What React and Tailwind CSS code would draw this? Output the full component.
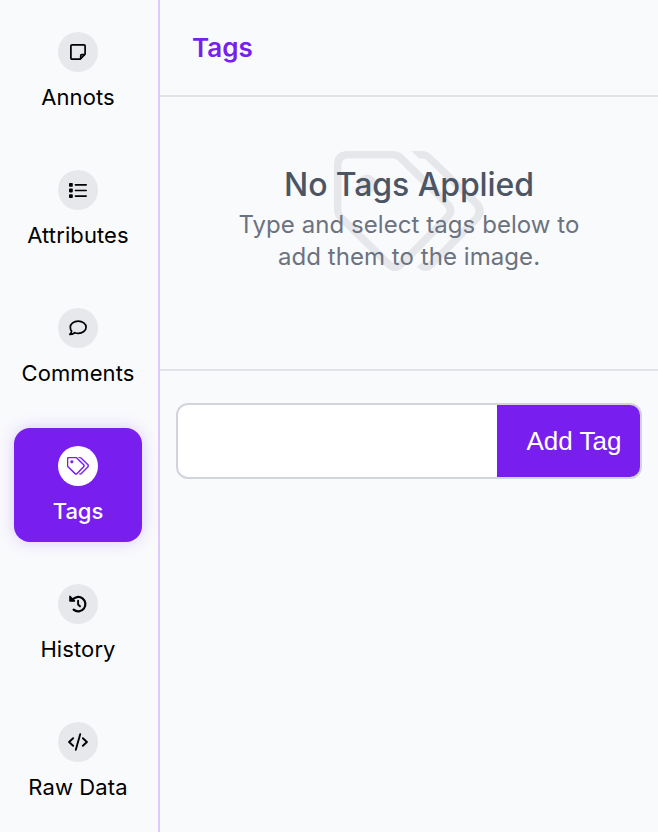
import { useState } from 'react'
import clsx from 'clsx'

function NoteIcon() {
  return (
    <svg width="16" height="16" viewBox="0 0 16 16" fill="none" stroke="currentColor" strokeWidth="1.7" strokeLinejoin="round">
      <path d="M2 .9h12A1.100 1.100 0 0 1 15.100 2v8.200l-4.900 4.900H2A1.100 1.100 0 0 1 .9 14V2A1.100 1.100 0 0 1 2 .9z" />
      <path d="M15 10.700h-3.300a1 1 0 0 0-1 1V15" />
    </svg>
  )
}

function ListIcon() {
  return (
    <svg width="18" height="15" viewBox="0 0 18 15" fill="currentColor">
      <rect x="0" y="0" width="3.8" height="3.8" rx=".8" />
      <rect x="0" y="5.6" width="3.8" height="3.8" rx=".8" />
      <rect x="0" y="11.2" width="3.8" height="3.8" rx=".8" />
      <rect x="5.6" y="1.1" width="12.4" height="1.6" rx=".8" />
      <rect x="5.6" y="6.7" width="12.4" height="1.6" rx=".8" />
      <rect x="5.6" y="12.3" width="12.4" height="1.6" rx=".8" />
    </svg>
  )
}

function CommentIcon() {
  return (
    <svg width="18" height="16" viewBox="0 0 18 16" fill="none" stroke="currentColor" strokeWidth="1.7" strokeLinejoin="round">
      <path d="M9.200 1.100c4.400 0 7.900 2.700 7.900 6.100s-3.500 6.100-7.900 6.100c-1.200 0-2.400-.2-3.400-.6-1.300.9-3 1.700-4.900 1.700.8-.9 1.500-2.100 1.700-3.300C1.700 10.100 1.300 8.700 1.300 7.200c0-3.400 3.500-6.100 7.900-6.100z" />
    </svg>
  )
}

function TagsIcon({ className, outline = 0 }) {
  return (
    <svg viewBox="0 0 150 120" fill="currentColor" className={className}>
      <path
        d="M14 3.750H59q4.500 0 7.500 3L113.500 53q6 7 0 13L67 113.500q-6 5.500-12 0L7 66.500q-3.250-3.250-3.250-7.500V14q0-10.250 10.250-10.250z"
        fill="none" stroke="currentColor" strokeWidth={7.5 + outline}
      />
      <circle cx="33" cy="33" r="9.500" stroke="currentColor" strokeWidth={outline} />
      <path
        d="M77.500 0H88q5.500 0 9.500 4L145.500 50q8.500 10 0 20L100 116q-8.500 8-17.300-.3l5.300-4.200q3.500 2 6.700-.8L139.500 65q3.500-5 0-10L92.500 9.200q-1.600-1.700-4-1.700H85z"
        stroke="currentColor" strokeWidth={outline}
      />
    </svg>
  )
}

function HistoryIcon() {
  return (
    <svg width="18" height="18" viewBox="0 0 18 18" fill="none" stroke="currentColor" strokeWidth="2.200" strokeLinecap="round" strokeLinejoin="round">
      <path d="M3.300 5A7.200 7.200 0 1 1 4.600 14.700" />
      <path d="M.9 1.300V6h4.700z" fill="currentColor" strokeWidth="1.300" />
      <path d="M9.100 5.700v3.800l1.900 1.800" strokeWidth="1.900" />
    </svg>
  )
}

function CodeIcon() {
  return (
    <svg width="20" height="18" viewBox="0 0 20 18" fill="none" stroke="currentColor" strokeWidth="1.900" strokeLinecap="round" strokeLinejoin="round">
      <path d="M5.100 5.200 1.100 9l4 3.800M14.900 5.200l4 3.800-4 3.800M12.200 1.200 7.800 16.800" />
    </svg>
  )
}

const tabs = [
  { id: 'annots', label: 'Annots', icon: <NoteIcon /> },
  { id: 'attributes', label: 'Attributes', icon: <ListIcon /> },
  { id: 'comments', label: 'Comments', icon: <CommentIcon /> },
  { id: 'tags', label: 'Tags', icon: <TagsIcon className="w-[22px]" outline={2.5} /> },
  { id: 'history', label: 'History', icon: <HistoryIcon /> },
  { id: 'raw', label: 'Raw Data', icon: <CodeIcon /> },
]

function Sidebar({ active, onSelect }) {
  return (
    <nav className="flex w-40 shrink-0 flex-col gap-6 border-r-2 border-[#dfc8fb] py-3.5 pl-3.5">
      {tabs.map((tab) => {
        const isActive = tab.id === active
        return (
          <button
            key={tab.id}
            onClick={() => onSelect(tab.id)}
            className={clsx(
              'flex h-[114px] w-32 shrink-0 flex-col items-center rounded-2xl pt-[18px]',
              isActive ? 'bg-[#781ff0] text-white shadow-[0_0_16px_rgba(120,31,240,0.22)]' : 'text-black',
            )}
          >
            <span className={clsx('flex size-10 items-center justify-center rounded-full', isActive ? 'bg-white text-[#781ff0]' : 'bg-[#e7e8ec]')}>
              {tab.icon}
            </span>
            <span className={clsx('mt-2.5 text-[22px] leading-[30px] whitespace-nowrap', isActive ? 'font-medium' : 'tracking-[0.1px]')}>{tab.label}</span>
          </button>
        )
      })}
    </nav>
  )
}

export default function App() {
  const [active, setActive] = useState('tags')
  const [value, setValue] = useState('')

  return (
    <div className="flex h-screen overflow-hidden bg-[#f9fafc] font-['Inter',sans-serif]">
      <Sidebar active={active} onSelect={setActive} />

      <main className="flex min-w-0 flex-1 flex-col">
        <header className="flex h-[97px] items-center border-b-2 border-[#e1e3e8] px-8">
          <h1 className="text-[26px] font-semibold text-[#781ff0]">Tags</h1>
        </header>

        {/* Empty state */}
        <section className="relative h-[274px] border-b-2 border-[#e1e3e8] pt-[70px] text-center">
          <TagsIcon className="absolute top-[54px] left-[174px] w-[150px] text-[#e5e7eb]" />
          <div className="relative">
            <h2 className="text-[32px] leading-9 font-medium tracking-[-0.1px] text-[#4b5563]">No Tags Applied</h2>
            <p className="mt-1.5 text-2xl leading-8 tracking-[0.06px] text-[#6b7280]">
              Type and select tags below to
              <br />
              add them to the image.
            </p>
          </div>
        </section>

        {/* New tag form */}
        <form onSubmit={(e) => e.preventDefault()} className="mx-4 mt-8 flex h-[76px] overflow-hidden rounded-xl border-2 border-[#d1d5db] bg-white">
          <input value={value} onChange={(e) => setValue(e.target.value)} className="min-w-0 flex-1 px-4 text-2xl outline-none" />
          <button type="submit" className="w-[143px] bg-[#781ff0] pl-[11px] font-['Liberation_Sans',sans-serif] text-[26px] text-white">Add Tag</button>
        </form>
      </main>
    </div>
  )
}
